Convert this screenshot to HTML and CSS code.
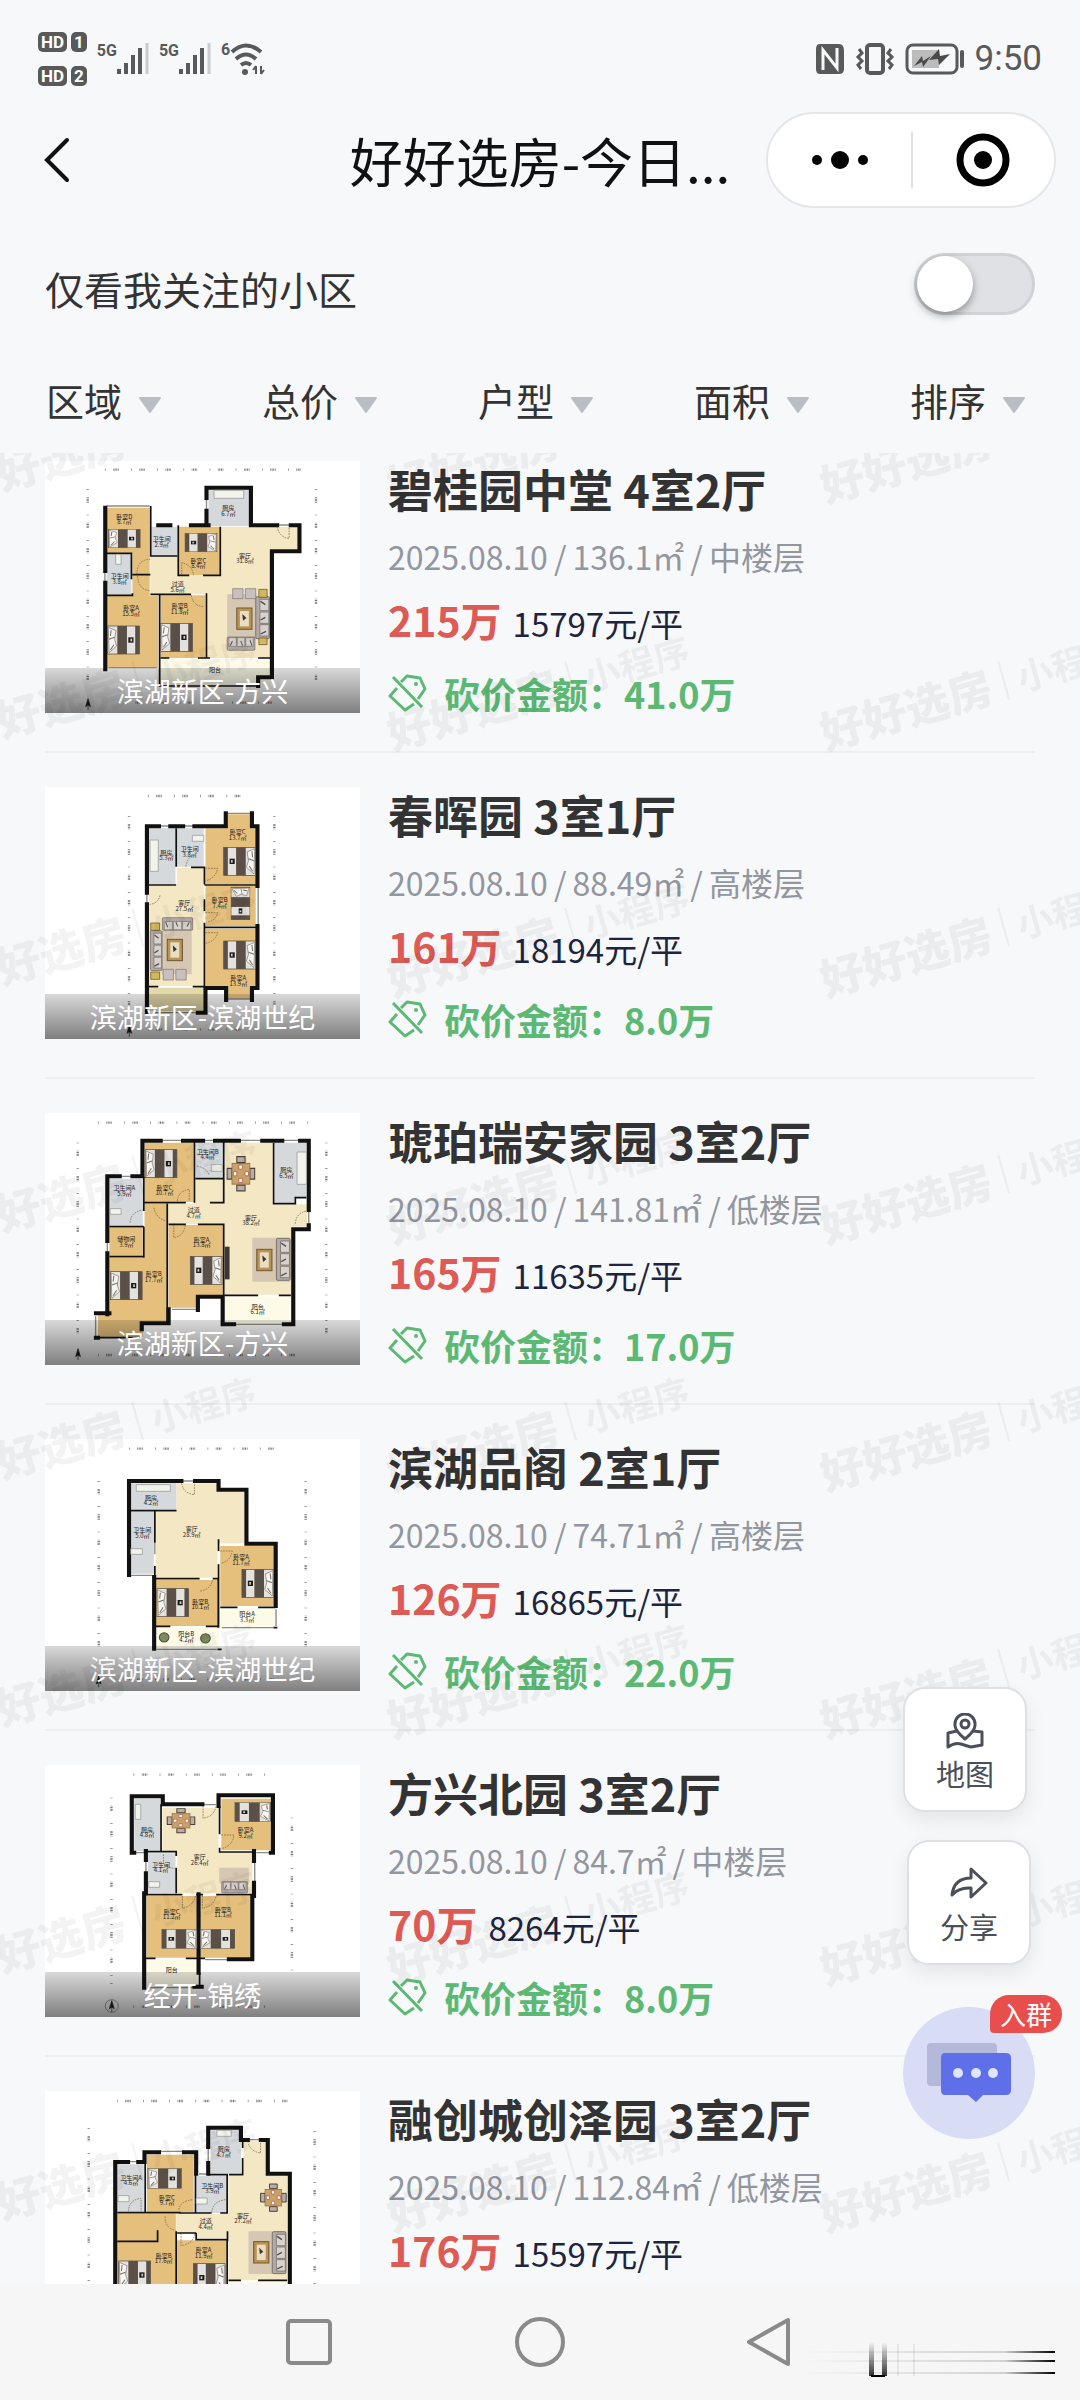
FILE: index.html
```
<!DOCTYPE html>
<html lang="zh-CN">
<head>
    <meta charset="UTF-8">
    <title>好好选房-今日成交</title>
    <meta name="viewport" content="width=device-width, initial-scale=1.0">
    <link rel="stylesheet" href="styles.css">
</head>
<body>

<!-- shared furniture and icons -->
<svg class="defs" aria-hidden="true">
    <defs>
        <g id="bed">
            <rect width="92" height="84" fill="#e4e2de" stroke="#4a4038" stroke-width="2"/>
            <path d="M2 4L24 14 20 40 26 60 4 80Z" fill="#f7f6f3" stroke="#77706a" stroke-width="2"/>
            <path d="M4 40L20 34M10 12L8 30M8 72L18 56" stroke="#77706a" stroke-width="3"/>
            <rect x="28" width="28" height="84" fill="#5b5048"/>
            <rect x="80" width="12" height="84" fill="#5b5048"/>
            <rect x="60" y="34" width="15" height="16" fill="#1c1a18"/>
            <rect x="66" y="38" width="5" height="8" fill="#cfcac2"/>
        </g>
        <g id="dining">
            <path d="M28 0h24v14H28zM28 68h24v14H28zM0 28h14v26H0zM66 28h14v26H66z" fill="#b9aea6" stroke="#4a4038" stroke-width="3"/>
            <rect x="14" y="16" width="52" height="50" fill="#c9a06a" stroke="#8a6a42" stroke-width="2"/>
            <path d="M34 20h10v10H34zM34 52h10v10H34zM18 36h10v10H18zM52 36h10v10H52z" fill="#fff" stroke="#b0563a" stroke-width="2"/>
        </g>
        <g id="sofa">
            <rect width="40" height="126" rx="4" fill="#b3a9a6" stroke="#5b5450" stroke-width="2"/>
            <path d="M12 8h26v34H12zM12 46h26v34H12zM12 84h26v34H12z" fill="#d8d2cf" stroke="#6b6460" stroke-width="2"/>
            <path d="M14 14l14 10M14 70l14-8M14 112l16-8" stroke="#544c48" stroke-width="4"/>
        </g>
        <g id="table">
            <rect width="44" height="64" fill="#b79452" stroke="#6e5630" stroke-width="3"/>
            <rect x="9" y="9" width="26" height="46" fill="#e9ddc4"/>
            <path d="M16 18l12 12-10 8" fill="#3c3428"/>
        </g>
        <g id="compass">
            <path d="M0 0l7 24-7-5-7 5zM0 14v20" fill="#222" stroke="#222" stroke-width="2"/>
        </g>
        <symbol id="tag" viewBox="0 0 40 40">
            <path d="M13 9L19 3 32 5 37 16 30 26M9 15L2 23 17 37 26 31M5 4L34 34" fill="none" stroke="#5bb974" stroke-width="3" stroke-linejoin="round"/>
            <circle cx="28" cy="11" r="2" fill="#5bb974"/>
        </symbol>
        <symbol id="caret" viewBox="0 0 24 16">
            <path d="M2 1H22L12 15Z" fill="#b9bdc4" stroke="#b9bdc4" stroke-width="2" stroke-linejoin="round"/>
        </symbol>
    </defs>
</svg>

<div class="phone">
    <div class="status">
        <div class="status-side">
            <div class="hd">
                <div class="hd-row"><span class="chip">HD</span><span class="chip">1</span></div>
                <div class="hd-row"><span class="chip">HD</span><span class="chip">2</span></div>
            </div>
            <div class="signal">
                <span>5G</span>
                <svg width="32" height="32" viewBox="0 0 32 32" aria-hidden="true"><path d="M2 26v5M9 20v11M16 12v19M23 5v26" stroke="#595959" stroke-width="4"/><path d="M30 0v31" stroke="#c9cbcd" stroke-width="3"/></svg>
            </div>
            <div class="signal">
                <span>5G</span>
                <svg width="32" height="32" viewBox="0 0 32 32" aria-hidden="true"><path d="M2 26v5M9 20v11M16 12v19M23 5v26" stroke="#595959" stroke-width="4"/><path d="M30 0v31" stroke="#c9cbcd" stroke-width="3"/></svg>
            </div>
            <div class="signal">
                <span>6</span>
                <svg width="36" height="34" viewBox="0 0 36 34" aria-hidden="true"><path d="M2 10Q16-3 31 10M6 17Q16 8 26 17M11 23Q16 19 21 23" fill="none" stroke="#595959" stroke-width="4"/><circle cx="15" cy="30" r="3" fill="#595959"/><path d="M26 24v8M31 24v8M23 28l3-4M34 28l-3 4" stroke="#595959" stroke-width="2"/></svg>
            </div>
        </div>
        <div class="status-side">
            <svg width="30" height="32" viewBox="0 0 30 32" aria-hidden="true"><path d="M5 1H24Q29 1 29 8V26Q29 31 24 31H5Q1 31 1 26V6Q1 1 5 1Z" fill="#595959"/><path d="M8 27V7L22 25V5" fill="none" stroke="#f7f8fa" stroke-width="3"/></svg>
            <svg width="40" height="32" viewBox="0 0 40 32" aria-hidden="true"><rect x="12" y="2" width="16" height="28" rx="3" fill="none" stroke="#595959" stroke-width="4"/><path d="M4 6l3 4-4 4 4 4-4 4 3 4M36 6l-3 4 4 4-4 4 4 4-3 4" fill="none" stroke="#595959" stroke-width="3"/></svg>
            <svg width="60" height="32" viewBox="0 0 60 32" aria-hidden="true"><rect x="2" y="2" width="50" height="28" rx="6" fill="none" stroke="#595959" stroke-width="3"/><rect x="7" y="7" width="27" height="18" fill="#bcbcbc"/><path d="M9 23l8-10 1 5 8-5-8 11-1-5zM24 17L34 6l1 7 10-2-11 11-1-6z" fill="#4a4a4a"/><path d="M57 9v14" stroke="#595959" stroke-width="4" stroke-linecap="round"/></svg>
            <span class="clock">9:50</span>
        </div>
    </div>

    <header class="nav">
        <button class="back" aria-label="返回"><svg width="28" height="46" viewBox="0 0 28 46"><path d="M24 3L4 23 24 43" fill="none" stroke="#111" stroke-width="4" stroke-linecap="round"/></svg></button>
        <h1>好好选房-今日...</h1>
        <div class="capsule">
            <button aria-label="更多"><svg width="60" height="20" viewBox="0 0 60 20"><circle cx="7" cy="10" r="5"/><circle cx="30" cy="10" r="9"/><circle cx="53" cy="10" r="5"/></svg></button>
            <button aria-label="关闭"><svg width="54" height="54" viewBox="0 0 54 54"><circle cx="27" cy="27" r="23" fill="none" stroke="#000" stroke-width="7"/><circle cx="27" cy="27" r="9"/></svg></button>
        </div>
    </header>

    <div class="follow">
        <label for="follow">仅看我关注的小区</label>
        <input type="checkbox" id="follow" class="switch">
    </div>

    <div class="filters">
        <div class="filter"><select aria-label="区域"><option>区域</option></select><svg><use href="#caret"/></svg></div>
        <div class="filter"><select aria-label="总价"><option>总价</option></select><svg><use href="#caret"/></svg></div>
        <div class="filter"><select aria-label="户型"><option>户型</option></select><svg><use href="#caret"/></svg></div>
        <div class="filter"><select aria-label="面积"><option>面积</option></select><svg><use href="#caret"/></svg></div>
        <div class="filter"><select aria-label="排序"><option>排序</option></select><svg><use href="#caret"/></svg></div>
    </div>

    <main class="content">
        <div class="list">

            <article class="item">
                <div class="thumb">
                    <svg class="plan" viewBox="0 0 945 756" aria-hidden="true">
                        <g transform="scale(1.033 1) translate(-131 -65)">
                            <path class="dim" d="M305 91H875M255 150V740M918 150V740M370 790H850"/>
                            <path class="wood" d="M310 205H435V470H460V686H310V468H385V345H310ZM467 468H597V656H467ZM520 262H638V408H520Z"/>
                            <path class="bath" d="M310 345H382V467H310ZM440 262H515V352H440ZM606 148H724V260H606Z"/>
                            <path class="tile" d="M640 262H865V330H785V656H603V465H437V352H515V408H640Z"/>
                            <path class="balcony" d="M462 658H785V740H462Z"/>
                            <path class="rug" d="M660 465H745V600H660Z"/>
                            <path class="window" d="M310 200H435M315 685H455M600 180V210M305 395V430M805 257H845"/>
                            <path class="wall" d="M306 690V430M306 395V205M600 258V214M600 176V145H729V258H805M845 258H870V336H790V714H750V740M495 258H460M555 258H606"/>
                            <path class="partition" d="M310 342H382V420M310 468H385V462M438 200V350H515M518 258V408H550M590 408H640V262M385 406H437M437 465H555M464 465V740H750M600 462V656M467 656H492M575 656H610M750 656H785"/>
                            <path class="door" d="M398 405Q398 360 437 360M400 410Q402 452 437 454M528 405V370Q560 378 562 408M556 468Q560 500 592 502M805 262Q812 295 840 297V262"/>
                            <use href="#bed" transform="translate(313 560)"/>
                            <use href="#bed" transform="translate(467 552)"/>
                            <use href="#bed" transform="translate(315 270) scale(1 .66)"/>
                            <use href="#bed" transform="translate(630 282) scale(-1 .66)"/>
                            <use href="#sofa" transform="translate(743 472)"/>
                            <use href="#sofa" transform="translate(660 633) rotate(-90) scale(1 .64)"/>
                            <use href="#table" transform="translate(688 506)"/>
                            <path class="chair" d="M676 448h30v30h-30zM713 448h30v30h-30z"/>
                            <path class="lamp" d="M752 450h24v24h-24zM752 596h24v20h-24z"/>
                            <path class="stove" d="M622 153H708V177H622ZM336 345h16v30h-16z"/>
                            <use href="#compass" transform="translate(256 778)"/>
                        </g>
                        <g class="room">
                            <text x="238" y="175">卧室D</text><text x="238" y="190">8.7㎡</text>
                            <text x="350" y="240">卫生间</text><text x="350" y="257">2.9㎡</text>
                            <text x="460" y="305">卧室C</text><text x="460" y="322">8.4㎡</text>
                            <text x="224" y="352">卫生间</text><text x="224" y="370">3.8㎡</text>
                            <text x="398" y="375">过道</text><text x="398" y="392">5.6㎡</text>
                            <text x="600" y="290">客厅</text><text x="600" y="307">31.8㎡</text>
                            <text x="258" y="448">卧室A</text><text x="258" y="465">15.5㎡</text>
                            <text x="404" y="442">卧室B</text><text x="404" y="459">11.8㎡</text>
                            <text x="550" y="148">厨房</text><text x="550" y="164">6.7㎡</text>
                            <text x="510" y="632">阳台</text>
                        </g>
                    </svg>
                    <span class="area">滨湖新区-方兴</span>
                </div>
                <div class="info">
                    <h2>碧桂园中堂 4室2厅</h2>
                    <p class="meta"><span>2025.08.10</span><span>/</span><span>136.1㎡</span><span>/</span><span>中楼层</span></p>
                    <p class="price"><strong>215万</strong><span>15797元/平</span></p>
                    <p class="bargain"><svg><use href="#tag"/></svg><span>砍价金额：41.0万</span></p>
                </div>
            </article>

            <article class="item">
                <div class="thumb">
                    <svg class="plan" viewBox="0 0 945 756" aria-hidden="true">
                        <g transform="scale(1.033 1) translate(-131 -53)">
                            <path class="dim" d="M430 80H715M375 140V720M797 140V720M430 780H725"/>
                            <path class="wood" d="M597 177H661V135H727V177H743V345H597ZM597 350H743V470H597ZM597 478H743V650H727V688H661V650H597Z"/>
                            <path class="bath" d="M433 177H510V345H433ZM514 177H592V292H514Z"/>
                            <path class="tile" d="M514 296H592V650H433V350H514Z"/>
                            <path class="terrace" d="M433 655H591V725H433Z"/>
                            <path class="rug" d="M470 485H557V615H470Z"/>
                            <path class="window" d="M462 170H495M532 170H565M661 132H727M750 350V470M427 370V405M661 689H727M450 730H570"/>
                            <path class="wall" d="M427 730V405M427 370V171H462M495 171H532M565 171H656V132M732 132V171H748V350M748 470V656H732V692M657 692V656H597V730H575"/>
                            <path class="partition" d="M512 177V292M433 347H512M555 294H594V345M594 390V425M594 460V655M594 347H750M594 474H750M433 652H460M560 652H597"/>
                            <path class="door" d="M597 297H632Q628 325 597 335M597 430H632Q628 455 600 458M597 490H632Q628 515 597 522M465 378Q460 402 435 405M540 292Q545 265 558 260"/>
                            <use href="#bed" transform="translate(742 234) scale(-1 1)"/>
                            <use href="#bed" transform="translate(742 515) scale(-1 1)"/>
                            <use href="#bed" transform="translate(726 354) rotate(90) scale(1.05 .65)"/>
                            <use href="#sofa" transform="translate(437 484) scale(.85 .95)"/>
                            <use href="#sofa" transform="translate(560 445) rotate(90) scale(.95 .7)"/>
                            <use href="#table" transform="translate(486 510)"/>
                            <path class="chair" d="M474 600h30v32h-30zM511 600h30v32h-30z"/>
                            <path class="lamp" d="M438 461h26v22h-26zM438 608h26v22h-26z"/>
                            <path class="stove" d="M436 212H460V306H436ZM559 198h33v18h-33z"/>
                            <use href="#compass" transform="translate(376 768)"/>
                        </g>
                        <g class="room">
                            <text x="578" y="142">卧室C</text><text x="578" y="159">13.7㎡</text>
                            <text x="364" y="204">厨房</text><text x="364" y="220">5.3㎡</text>
                            <text x="434" y="193">卫生间</text><text x="434" y="209">3.8㎡</text>
                            <text x="418" y="355">客厅</text><text x="418" y="371">27.5㎡</text>
                            <text x="524" y="346">卧室B</text><text x="524" y="362">7.4㎡</text>
                            <text x="580" y="580">卧室A</text><text x="580" y="596">13.9㎡</text>
                        </g>
                    </svg>
                    <span class="area">滨湖新区-滨湖世纪</span>
                </div>
                <div class="info">
                    <h2>春晖园 3室1厅</h2>
                    <p class="meta"><span>2025.08.10</span><span>/</span><span>88.49㎡</span><span>/</span><span>高楼层</span></p>
                    <p class="price"><strong>161万</strong><span>18194元/平</span></p>
                    <p class="bargain"><svg><use href="#tag"/></svg><span>砍价金额：8.0万</span></p>
                </div>
            </article>

            <article class="item">
                <div class="thumb">
                    <svg class="plan" viewBox="0 0 945 756" aria-hidden="true">
                        <g transform="scale(1.033 1) translate(-131 -71)">
                            <path class="dim" d="M285 100H900M226 160V740M948 160V740M285 797H890"/>
                            <path class="wood" d="M420 160H562V338H420ZM318 415H415V500H318ZM420 343H485V695H415V743H285V678H318V505H420ZM490 407H648V620H575V655H490Z"/>
                            <path class="bath" d="M568 160H648V266H568ZM799 160H890V325H855V340H799ZM318 268H415V410H318Z"/>
                            <path class="tile" d="M653 160H793V345H892V412H848V616H653V405H488V343H565V270H653Z"/>
                            <path class="balcony" d="M653 621H845V701H653Z"/>
                            <path class="rug" d="M733 445H843V577H733Z"/>
                            <path class="window" d="M467 153H532M590 153H625M694 153H762M820 153H872M348 261H385M312 455V492M278 680V740M500 660H570M680 705H825M897 365V405"/>
                            <path class="wall" d="M312 675V492M312 455V261H348M385 261H414V154H467M532 154H590M625 154H694M762 154H820M872 154H897V362M897 408V420H852V705H825M680 705H647V622H575V662M490 660V702H412V720M279 672H318M279 745H285"/>
                            <path class="partition" d="M565 154V340M420 340H540M650 154V340H610M568 268H650M795 160V343H858V325H890M418 262V365M418 412V505M318 412H418M318 502H418M486 343V700M490 405H540M575 405H650V620M653 618H750M810 618H845M285 745H412"/>
                            <path class="door" d="M515 335Q518 305 550 300V335M447 355Q455 390 485 395M505 407V445Q535 440 538 407M378 400Q380 368 415 362M858 403Q860 370 892 365M572 230Q600 235 608 258"/>
                            <use href="#bed" transform="translate(422 181)"/>
                            <use href="#bed" transform="translate(321 547)"/>
                            <use href="#bed" transform="translate(645 501) scale(-1 1)"/>
                            <use href="#dining" transform="translate(660 202) scale(1 1.25)"/>
                            <use href="#sofa" transform="translate(803 447)"/>
                            <use href="#table" transform="translate(746 480)"/>
                            <path class="stove" d="M863 188H890V285H863ZM614 226h32v20h-32zM320 358h32v17h-32z"/>
                            <path d="M653 472h14v98h-14z" fill="#3a3734"/>
                            <use href="#compass" transform="translate(227 778)"/>
                        </g>
                        <g class="room">
                            <text x="488" y="122">卫生间B</text><text x="488" y="138">4.4㎡</text>
                            <text x="238" y="232">卫生间A</text><text x="238" y="248">5.9㎡</text>
                            <text x="358" y="230">卧室C</text><text x="358" y="247">10.7㎡</text>
                            <text x="446" y="298">过道</text><text x="446" y="314">4.7㎡</text>
                            <text x="724" y="178">厨房</text><text x="724" y="194">6.5㎡</text>
                            <text x="618" y="321">客厅</text><text x="618" y="337">38.2㎡</text>
                            <text x="244" y="385">储物间</text><text x="244" y="402">3.9㎡</text>
                            <text x="470" y="387">卧室A</text><text x="470" y="403">13.8㎡</text>
                            <text x="326" y="490">卧室B</text><text x="326" y="508">17.7㎡</text>
                            <text x="638" y="588">阳台</text><text x="638" y="604">6.1㎡</text>
                        </g>
                    </svg>
                    <span class="area">滨湖新区-方兴</span>
                </div>
                <div class="info">
                    <h2>琥珀瑞安家园 3室2厅</h2>
                    <p class="meta"><span>2025.08.10</span><span>/</span><span>141.81㎡</span><span>/</span><span>低楼层</span></p>
                    <p class="price"><strong>165万</strong><span>11635元/平</span></p>
                    <p class="bargain"><svg><use href="#tag"/></svg><span>砍价金额：17.0万</span></p>
                </div>
            </article>

            <article class="item">
                <div class="thumb">
                    <svg class="plan" viewBox="0 0 945 756" aria-hidden="true">
                        <g transform="scale(1.033 1) translate(-131 -89)">
                            <path class="dim" d="M375 118H800M287 215V720M888 215V720M375 810H795"/>
                            <path class="wood" d="M640 410H796V590H640ZM453 512H631V650H453Z"/>
                            <path class="bath" d="M380 222H513V302H380ZM380 307H447V493H380Z"/>
                            <path class="tile" d="M513 222H630V248H710V402H632V505H453V307H513Z"/>
                            <path class="balcony" d="M640 597H802V652H640ZM455 655H637V716H455Z"/>
                            <path class="window" d="M380 498H443M527 215H567M645 655H797M455 720H630M450 400V435M802 600V650"/>
                            <path class="wall" d="M375 497V215H527M567 215H635V241H716V403H801V590M448 503V718"/>
                            <path class="partition" d="M380 304H513M450 304V400M450 470V508H580M618 508H634V655M635 390V425M635 465V655M640 594H690M750 594H801M453 651H495M598 651H634M795 655H806M632 720H644"/>
                            <path class="door" d="M528 222Q532 252 565 256V222M640 425H675Q670 455 642 462M582 545Q612 540 618 512"/>
                            <use href="#bed" transform="translate(795 480) scale(-1 1)"/>
                            <use href="#bed" transform="translate(456 538)"/>
                            <circle cx="477" cy="684" r="14" fill="#7c8a5e" stroke="#4a5238" stroke-width="3"/>
                            <circle cx="597" cy="687" r="14" fill="#7c8a5e" stroke="#4a5238" stroke-width="3"/>
                            <path class="stove" d="M396 226H495V246H396ZM380 418h34v17h-34z"/>
                            <use href="#compass" transform="translate(287 800)"/>
                        </g>
                        <g class="room">
                            <text x="318" y="182">厨房</text><text x="318" y="198">4.2㎡</text>
                            <text x="292" y="280">卫生间</text><text x="292" y="297">5.0㎡</text>
                            <text x="440" y="276">客厅</text><text x="440" y="293">28.9㎡</text>
                            <text x="588" y="361">卧室A</text><text x="588" y="378">11.7㎡</text>
                            <text x="466" y="494">卧室B</text><text x="466" y="510">10.1㎡</text>
                            <text x="606" y="532">阳台A</text><text x="606" y="549">3.3㎡</text>
                            <text x="424" y="592">阳台B</text><text x="424" y="608">4.2㎡</text>
                        </g>
                    </svg>
                    <span class="area">滨湖新区-滨湖世纪</span>
                </div>
                <div class="info">
                    <h2>滨湖品阁 2室1厅</h2>
                    <p class="meta"><span>2025.08.10</span><span>/</span><span>74.71㎡</span><span>/</span><span>高楼层</span></p>
                    <p class="price"><strong>126万</strong><span>16865元/平</span></p>
                    <p class="bargain"><svg><use href="#tag"/></svg><span>砍价金额：22.0万</span></p>
                </div>
            </article>

            <article class="item">
                <div class="thumb">
                    <svg class="plan" viewBox="0 0 945 756" aria-hidden="true">
                        <g transform="scale(1.033 1) translate(-131 -77)">
                            <path class="dim" d="M388 106H790M324 175V735M848 235V715M388 802H790"/>
                            <path class="wood" d="M643 178H787V333H643ZM426 470H572V655H426ZM582 470H727V655H582Z"/>
                            <path class="bath" d="M390 178H465V335H390ZM430 342H510V462H430Z"/>
                            <path class="tile" d="M472 205H635V338H733V462H515V335H472Z"/>
                            <path class="balcony" d="M426 660H576V745H426Z"/>
                            <path class="rug" d="M637 385H723V432H637Z"/>
                            <path class="window" d="M390 340H420M588 196H628M740 365V430M424 362V402M596 661H662M745 340H787M430 745H560"/>
                            <path class="wall" d="M390 340H383V171H473V195H588M635 200V168H793V340H787M738 335V365M738 430V470H733V660H665M424 335V362M424 402V462H419V745M577 465V700M565 742H586"/>
                            <path class="partition" d="M468 195V335M418 337H512V350M512 385V462M638 200V285M638 325V338H740M419 466H530M570 466H590M628 466H735M419 657H452M540 657H596M580 700V740"/>
                            <path class="door" d="M590 200V237Q622 232 628 200M643 287H680Q676 320 643 328M530 470V507Q562 500 568 470M588 470V507Q622 500 628 470M475 345V375Q490 385 508 388"/>
                            <use href="#bed" transform="translate(786 190) scale(-1.12 .68)"/>
                            <use href="#bed" transform="translate(572 570) scale(-1.1 .68)"/>
                            <use href="#bed" transform="translate(582 570) scale(1.08 .68)"/>
                            <use href="#dining" transform="translate(486 208) scale(1 .88)"/>
                            <use href="#sofa" transform="translate(644 461) rotate(-90) scale(.85 .6)"/>
                            <path class="stove" d="M393 195H409V240H393ZM432 427h32v17h-32z"/>
                            <circle class="ring" cx="325" cy="800" r="19"/>
                            <use href="#compass" transform="translate(325 784)"/>
                        </g>
                        <g class="room">
                            <text x="306" y="201">厨房</text><text x="306" y="217">4.8㎡</text>
                            <text x="602" y="202">卧室A</text><text x="602" y="218">9.2㎡</text>
                            <text x="348" y="305">卫生间</text><text x="348" y="321">4.1㎡</text>
                            <text x="464" y="282">客厅</text><text x="464" y="299">26.4㎡</text>
                            <text x="380" y="446">卧室C</text><text x="380" y="462">11.2㎡</text>
                            <text x="534" y="440">卧室B</text><text x="534" y="456">11.1㎡</text>
                            <text x="380" y="620">阳台</text>
                        </g>
                    </svg>
                    <span class="area">经开-锦绣</span>
                </div>
                <div class="info">
                    <h2>方兴北园 3室2厅</h2>
                    <p class="meta"><span>2025.08.10</span><span>/</span><span>84.7㎡</span><span>/</span><span>中楼层</span></p>
                    <p class="price"><strong>70万</strong><span>8264元/平</span></p>
                    <p class="bargain"><svg><use href="#tag"/></svg><span>砍价金额：8.0万</span></p>
                </div>
            </article>

            <article class="item">
                <div class="thumb">
                    <svg class="plan" viewBox="0 0 945 756" aria-hidden="true">
                        <g transform="scale(1.033 1) translate(-131 -94)">
                            <path class="dim" d="M340 124H835M258 205V760M914 215V760"/>
                            <path class="wood" d="M427 285H563V457H427ZM341 462H511V790H341ZM515 542H658V790H515Z"/>
                            <path class="bath" d="M341 314H418V457H341ZM612 212H700V342H612ZM570 348H658V460H570Z"/>
                            <path class="tile" d="M708 245H773V348H834V662H664V535H572V520H512V462H664V348H708Z"/>
                            <path class="balcony" d="M664 666H834V760H664Z"/>
                            <path class="rug" d="M722 515H830V643H722Z"/>
                            <path class="window" d="M372 306H402M462 275H535M605 262V310M720 240H758M578 343H600"/>
                            <path class="wall" d="M335 790V307H372M402 307H420V278H462M535 278H570V342M605 342V310M605 262V204H700V241H720M758 241H778V342H842V790"/>
                            <path class="partition" d="M341 459H425M422 290V459H525M568 345V460H520M568 460H615M605 345H660V460H640M705 241V265M705 295V345H665M458 512V545H341M512 515V790M570 520V540H660V790M664 662H700M750 662H834M515 520H570M661 515V545"/>
                            <path class="door" d="M373 455Q375 420 410 416V455M520 450Q522 425 560 420M615 458Q618 425 655 420M480 470Q478 505 510 512M526 522V558Q562 552 566 522M720 245Q725 275 757 280V245"/>
                            <use href="#bed" transform="translate(430 327) scale(1.05 .7)"/>
                            <use href="#bed" transform="translate(345 604)"/>
                            <use href="#bed" transform="translate(654 612) scale(-1 1)"/>
                            <use href="#dining" transform="translate(757 373) scale(.93 1)"/>
                            <use href="#sofa" transform="translate(791 516)"/>
                            <use href="#table" transform="translate(737 546)"/>
                            <path class="stove" d="M630 212H672V230H630ZM343 408h32v18h-32zM570 415h32v18h-32z"/>
                        </g>
                        <g class="room">
                            <text x="258" y="266">卫生间A</text><text x="258" y="283">4.6㎡</text>
                            <text x="366" y="326">卧室C</text><text x="366" y="343">9.7㎡</text>
                            <text x="536" y="181">厨房</text><text x="536" y="198">4.7㎡</text>
                            <text x="502" y="290">卫生间B</text><text x="502" y="307">3.9㎡</text>
                            <text x="482" y="397">过道</text><text x="482" y="414">4.4㎡</text>
                            <text x="594" y="380">客厅</text><text x="594" y="397">27.2㎡</text>
                            <text x="356" y="500">卧室B</text><text x="356" y="516">17.6㎡</text>
                            <text x="476" y="484">卧室A</text><text x="476" y="501">11.9㎡</text>
                        </g>
                    </svg>
                </div>
                <div class="info">
                    <h2>融创城创泽园 3室2厅</h2>
                    <p class="meta"><span>2025.08.10</span><span>/</span><span>112.84㎡</span><span>/</span><span>低楼层</span></p>
                    <p class="price"><strong>176万</strong><span>15597元/平</span></p>
                </div>
            </article>
        </div>

        <svg class="watermark" aria-hidden="true">
            <defs>
                <pattern id="wm" x="-48" y="-120" width="433" height="247" patternUnits="userSpaceOnUse">
                    <g transform="rotate(-16 8 170)">
                        <text x="8" y="170" class="wm-name">好好选房</text>
                        <path d="M198 132V172" stroke="#000" stroke-width="2"/>
                        <text x="212" y="168" class="wm-sub">小程序</text>
                    </g>
                </pattern>
            </defs>
            <rect width="100%" height="100%" fill="url(#wm)"/>
        </svg>

        <div class="float">
            <button class="tool">
                <svg width="38" height="36" viewBox="0 0 38 36" aria-hidden="true"><g fill="none" stroke="#4c4f5a" stroke-width="3" stroke-linejoin="round"><path d="M19 26Q8 17 9 11A10 10 0 0 1 29 11Q30 17 19 26Z"/><circle cx="19" cy="11" r="4"/><path d="M11 18L2 20V34Q9 29 15 31T25 34L36 32V19L27 18"/></g></svg>
                <span>地图</span>
            </button>
            <button class="tool tool-share">
                <svg width="38" height="36" viewBox="0 0 38 36" aria-hidden="true"><path d="M21 3L36 17 21 31V22Q9 21 2 29 4 12 21 12Z" fill="none" stroke="#4c4f5a" stroke-width="3" stroke-linejoin="round"/></svg>
                <span>分享</span>
            </button>
            <button class="chat" aria-label="入群">
                <svg width="84" height="60" viewBox="0 0 84 60" aria-hidden="true"><rect width="70" height="43" rx="4" fill="#b4b9dc"/><path d="M18 10H79Q84 10 84 15V47Q84 52 79 52H56L49 59 41 52H18Q14 52 14 47V15Q14 10 18 10Z" fill="#5f6fe9"/><circle cx="31" cy="30" r="5" fill="#dde6fa"/><circle cx="49" cy="30" r="5" fill="#dde6fa"/><circle cx="66" cy="30" r="5" fill="#dde6fa"/></svg>
                <span class="badge">入群</span>
            </button>
        </div>
    </main>

    <nav class="sysbar">
        <button aria-label="最近任务"><svg width="52" height="52" viewBox="0 0 52 52"><rect x="5" y="5" width="42" height="42" rx="3"/></svg></button>
        <button aria-label="主屏幕"><svg width="52" height="52" viewBox="0 0 52 52"><circle cx="26" cy="26" r="23"/></svg></button>
        <button aria-label="返回上一页"><svg width="52" height="52" viewBox="0 0 52 52"><path d="M43 4V48L4 26Z"/></svg></button>
        <svg class="mark" viewBox="0 0 256 36" aria-hidden="true">
            <defs>
                <linearGradient id="fade-h"><stop offset="0" stop-color="#000" stop-opacity="0"/><stop offset=".8" stop-color="#000" stop-opacity=".15"/><stop offset="1" stop-color="#000"/></linearGradient>
                <linearGradient id="fade-v" x2="0" y2="1"><stop offset="0" stop-color="#000" stop-opacity="0"/><stop offset="1" stop-color="#000" stop-opacity=".8"/></linearGradient>
            </defs>
            <path d="M0 9H255V11H0ZM0 18H255V20H0ZM0 30H255V32H0Z" fill="url(#fade-h)"/>
            <path d="M69 0H74V34H69ZM82 0H87V34H82Z" fill="url(#fade-v)"/>
            <path d="M71 34H85" stroke="#000" stroke-width="2"/>
            <path d="M98 2V34M114 2V34" stroke="#000" stroke-opacity=".06" stroke-width="2"/>
        </svg>
    </nav>
</div>
</body>
</html>
```
FILE: styles.css
```
* { box-sizing: border-box; }
body { margin: 0; background: #f7f8fa; color: #333; font-family: "Noto Sans CJK SC", "Noto Sans", sans-serif; }
h1, h2, p { margin: 0; }
button { padding: 0; border: none; background: none; font-family: inherit; color: inherit; }
svg { display: block; flex: none; }
.defs { position: absolute; width: 0; height: 0; }

.phone { display: flex; flex-direction: column; height: 100vh; }

/* status bar */
.status { display: flex; justify-content: space-between; align-items: center; height: 108px; padding: 10px 38px 0; color: #595959; }
.status-side { display: flex; align-items: center; gap: 10px; }
.hd { display: flex; flex-direction: column; gap: 14px; }
.hd-row { display: flex; gap: 4px; }
.chip { padding: 0 3px; border-radius: 5px; background: #595959; color: #fff; font: bold 17px/20px "Roboto", sans-serif; }
.signal { display: flex; align-items: flex-start; }
.signal span { font: bold 16px/16px "Roboto", sans-serif; }
.clock { font: 35px/40px "Roboto", sans-serif; }

/* title bar */
.nav { display: grid; grid-template-columns: 1fr auto 1fr; align-items: center; height: 104px; padding: 0 24px 0 43px; }
.back { justify-self: start; }
.nav h1 { padding-right: 19px; color: #111; font-size: 53px; font-weight: 400; line-height: 60px; }
.capsule { display: flex; justify-self: end; width: 290px; height: 96px; border: 2px solid #e6e6e8; border-radius: 48px; background: #fff; }
.capsule button { display: flex; flex: 1; align-items: center; justify-content: center; }
.capsule button + button { position: relative; }
.capsule button + button::before { content: ""; position: absolute; left: 0; top: 18px; bottom: 18px; width: 2px; background: #dfe0e2; }

.follow { display: flex; align-items: center; justify-content: space-between; height: 144px; padding: 0 45px; font-size: 39px; }
.follow label { padding-top: 8px; }
.switch { appearance: none; width: 121px; height: 62px; margin: 0; border: 3px solid #d0d2d5; border-radius: 31px; background: #dfe1e4; }
.switch::before { content: ""; display: block; width: 56px; height: 56px; border-radius: 50%; background: #fff; box-shadow: 0 4px 8px rgba(0,0,0,0.35); }
.switch:checked { background: #5bb974; }
.switch:checked::before { margin-left: auto; }

.filters { display: flex; justify-content: space-between; height: 97px; padding: 0 54px 0 46px; }
.filter { display: flex; align-items: center; gap: 14px; padding-bottom: 10px; }
.filter select { appearance: none; width: 78px; padding: 0; border: none; background: none; color: #333; font-family: inherit; font-size: 38px; line-height: 56px; }
.filter svg { width: 24px; height: 16px; margin-top: 10px; }

/* listings */
.content { position: relative; flex: 1; min-height: 0; overflow: hidden; }
.list { height: 100%; padding: 8px 45px 0; overflow: hidden; }
.item { display: flex; gap: 28px; height: 292px; margin-bottom: 34px; border-bottom: 2px solid #eceef0; }
.thumb { position: relative; flex: none; width: 315px; height: 252px; background: #fff; overflow: hidden; }
.plan { width: 100%; height: 100%; }
.area { position: absolute; left: 0; right: 0; bottom: 0; height: 45px; background: linear-gradient(rgba(0,0,0,0.15), rgba(0,0,0,0.5)); color: #fff; font-size: 27px; line-height: 45px; text-align: center; }
.info { flex: 1; min-width: 0; }
.info h2 { font-size: 45px; line-height: 56px; }
.meta { display: flex; gap: 6px; margin-top: 18px; color: #92969f; font-size: 32px; line-height: 42px; }
.price { display: flex; align-items: baseline; gap: 11px; height: 52px; margin-top: 16px; line-height: 52px; }
.price strong { color: #dd5a55; font-size: 41px; }
.price span { color: #1d2440; font-size: 33px; }
.bargain { display: flex; align-items: center; gap: 16px; margin-top: 24px; color: #5bb974; font-size: 36px; font-weight: bold; line-height: 48px; }
.bargain svg { width: 40px; height: 40px; }

/* floor plans */
.wood { fill: #e5c07c; }
.tile { fill: #f4e7c4; }
.bath { fill: #d5d9dc; }
.balcony { fill: #fdfbe8; }
.terrace { fill: #e3d8a8; }
.rug { fill: #d6c7b2; }
.chair { fill: #c8bfbf; stroke: #7d7575; stroke-width: 2; }
.lamp { fill: #d3b75c; stroke: #5c4c20; stroke-width: 2; }
.stove { fill: #f2f3ea; stroke: #8d9190; stroke-width: 2; }
.wall { fill: none; stroke: #111; stroke-width: 12; stroke-linecap: square; stroke-linejoin: miter; }
.partition { fill: none; stroke: #111; stroke-width: 5; }
.window { fill: none; stroke: #8b8b86; stroke-width: 4; }
.door { fill: none; stroke: #6b5c40; stroke-width: 2; stroke-dasharray: 5 3; }
.dim { fill: none; stroke: #777; stroke-width: 7; stroke-dasharray: 2 22 2 2 3 2 3 2 2 36; }
.ring { fill: none; stroke: #777; stroke-width: 2; }
.room { fill: #222; font-size: 18px; text-anchor: middle; }

.watermark { position: absolute; left: 0; top: 0; width: 100%; height: 100%; opacity: 0.045; pointer-events: none; }
.wm-name { font-size: 44px; font-weight: 900; }
.wm-sub { font-size: 36px; font-weight: bold; }

/* floating buttons */
.float { position: absolute; right: 45px; bottom: 145px; display: flex; flex-direction: column; align-items: flex-start; width: 132px; }
.tool { display: flex; flex-direction: column; align-items: center; gap: 6px; width: 124px; height: 125px; padding-top: 24px; border: 2px solid #dfe0e3; border-radius: 22px; background: #fff; box-shadow: 0 8px 20px rgba(0,0,0,0.08); color: #4c4f5a; font-size: 29px; line-height: 36px; }
.tool-share { align-self: flex-end; margin: 28px 4px 42px 0; }
.chat { position: relative; display: flex; align-items: center; justify-content: center; width: 132px; height: 132px; border-radius: 50%; background: #d9dcf5; }
.badge { position: absolute; left: 87px; top: -12px; width: 72px; border-radius: 19px 19px 19px 4px; background: #e84f4c; color: #fff; font-size: 26px; line-height: 38px; text-align: center; }

.sysbar { position: relative; display: flex; flex: none; justify-content: center; gap: 179px; height: 116px; background: #f6f6f6; }
.sysbar button svg { fill: none; stroke: #8a8a8a; stroke-width: 4; stroke-linejoin: round; }
.mark { position: absolute; right: 24px; bottom: 22px; width: 256px; height: 36px; }
```
